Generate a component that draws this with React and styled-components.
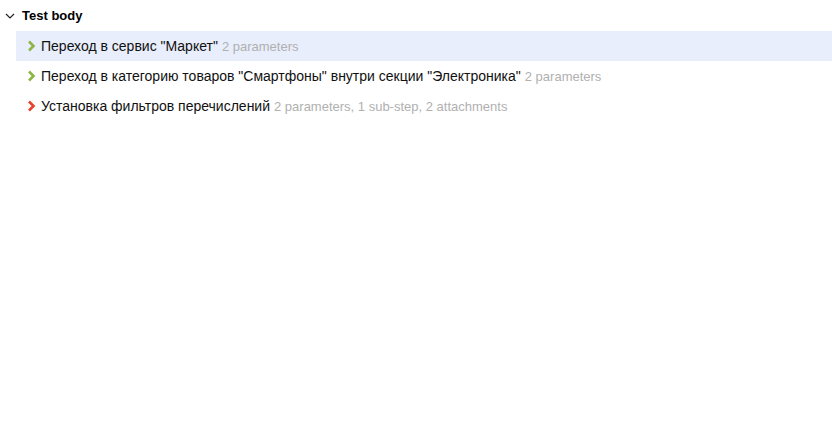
import styled, { createGlobalStyle } from "styled-components";

const GlobalStyle = createGlobalStyle`
  body {
    margin: 0;
    background: #fff;
    font-family: "Liberation Sans", Arial, sans-serif;
    color: #000;
  }
`;

const steps = [
  { title: 'Переход в сервис "Маркет"', meta: "2 parameters", status: "passed", active: true },
  {
    title: 'Переход в категорию товаров "Смартфоны" внутри секции "Электроника"',
    meta: "2 parameters",
    status: "passed",
  },
  {
    title: "Установка фильтров перечислений",
    meta: "2 parameters, 1 sub-step, 2 attachments",
    status: "failed",
  },
];

export default function App() {
  return (
    <>
      <GlobalStyle />
      <Section>
        <Header>
          <svg width="10" height="10" viewBox="0 0 10 10">
            <path d="M1 3l4 4 4-4" fill="none" stroke="#222" strokeWidth="1.2" />
          </svg>
          <Title>Test body</Title>
        </Header>
        {steps.map((s) => (
          <Row key={s.title} $active={s.active}>
            <Arrow $status={s.status} />
            <Name>{s.title}</Name>
            <Meta>{s.meta}</Meta>
          </Row>
        ))}
      </Section>
    </>
  );
}

function Arrow({ $status }) {
  return (
    <ArrowBox>
      <svg width="9" height="12" viewBox="0 0 9 12">
        <path
          d="M2 1.5l4.5 4.5L2 10.5"
          fill="none"
          stroke={$status === "failed" ? "#e8412c" : "#8fb545"}
          strokeWidth="2.6"
        />
      </svg>
    </ArrowBox>
  );
}

const Section = styled.div`
  display: flex;
  flex-direction: column;
`;

const Header = styled.div`
  display: flex;
  align-items: center;
  gap: 7px;
  height: 31px;
  padding-left: 5px;
`;

const Title = styled.span`
  font-size: 13px;
  font-weight: bold;
`;

const Row = styled.div`
  display: flex;
  align-items: baseline;
  height: 30px;
  margin-left: 16px;
  padding-left: 11px;
  background: ${(p) => (p.$active ? "#e8eefb" : "transparent")};
  white-space: nowrap;
  & > * {
    align-self: center;
  }
`;

const ArrowBox = styled.span`
  display: flex;
  width: 14px;
`;

const Name = styled.span`
  font-size: 14px;
  color: #111;
`;

const Meta = styled.span`
  font-size: 13px;
  color: #b0b0b0;
  margin-left: 4px;
`;
